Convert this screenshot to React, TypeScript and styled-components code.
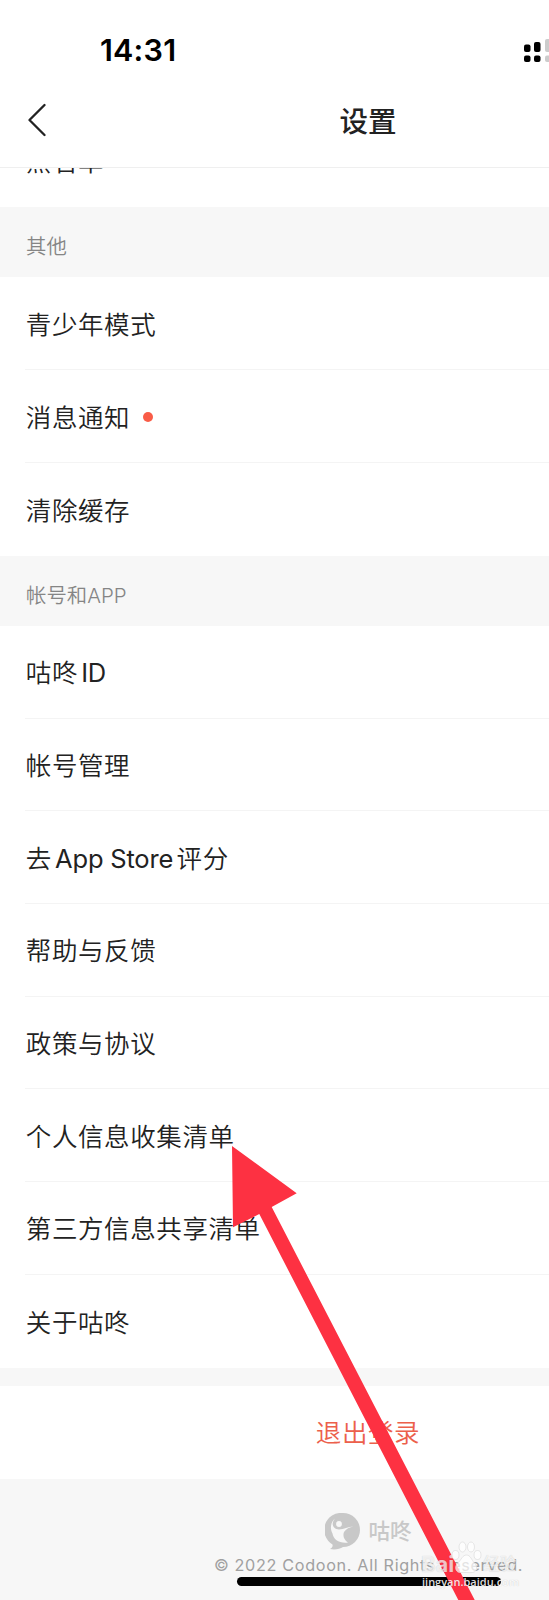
import React from "react";
import styled, { createGlobalStyle, css } from "styled-components";

const GlobalStyle = createGlobalStyle`
  *, *::before, *::after { box-sizing: border-box; }
  html, body { margin: 0; padding: 0; overflow: hidden; background: #f7f7f7; }
`;

const Viewport = styled.div`
  position: relative;
  width: 549px;
  height: 1600px;
  overflow: hidden;
  background: #f7f7f7;
  font-family: Inter, "Noto Sans CJK SC", sans-serif;
  color: #222;
`;

const Screen = styled.main`
  width: 737px;
  height: 1600px;
  display: flex;
  flex-direction: column;
`;

const StatusBar = styled.div`
  flex: none;
  height: 84px;
  padding: 15px 0 0 100px;
  display: flex;
  align-items: center;
  justify-content: space-between;
  background: #fff;
`;

const Clock = styled.time`
  font-size: 30.5px;
  line-height: 40px;
  font-weight: 600;
  letter-spacing: 0.2px;
  color: #000;
`;

const Signal = styled.svg`
  flex: none;
  width: 48px;
  height: 26px;
  margin-right: 165px;
`;

const NavBar = styled.header`
  flex: none;
  height: 84px;
  padding: 0 28px;
  display: grid;
  grid-template-columns: 20px 1fr 20px;
  align-items: center;
  background: #fff;
  border-bottom: 1px solid #efefef;
`;

const BackIcon = styled.svg`
  width: 20px;
  height: 34px;
  margin-top: -11px;
`;

const Title = styled.h1`
  margin: -7px 1px 0 0;
  text-align: center;
  font-size: 28.5px;
  line-height: 40px;
  font-weight: 500;
`;

const ClippedRow = styled.div`
  flex: none;
  height: 39px;
  overflow: hidden;
  display: flex;
  flex-direction: column;
  justify-content: flex-end;
  background: #fff;
`;

const SectionHeader = styled.h2`
  flex: none;
  margin: 0;
  height: 70px;
  padding: 10px 26px 0;
  display: flex;
  align-items: center;
  font-size: 20.4px;
  line-height: 30px;
  font-weight: 350;
  color: #858585;
`;

const List = styled.ul`
  flex: none;
  margin: 0;
  padding: 0;
  list-style: none;
  background: #fff;
`;

const rowText = css`
  height: 92.7px;
  display: flex;
  align-items: center;
  font-size: 25.5px;
  line-height: 36px;
  letter-spacing: 0.6px;
  font-weight: 350;
`;

const Row = styled.li<{ $last?: boolean; $tall?: boolean }>`
  ${rowText}
  flex: none;
  ${(p) => p.$tall && "height: 93px;"}
  margin-left: 25px;
  padding: 3px 0 0 0.8px;
  gap: 13px;
  border-bottom: ${(p) => (p.$last ? "0" : "1px solid #f4f4f4")};
`;

const Latin = styled.span`
  margin: 0 3.5px 0 3.2px;
  letter-spacing: -0.2px;
  font-weight: 400;
`;

const UnreadDot = styled.i`
  width: 10px;
  height: 10px;
  margin-top: -2px;
  border-radius: 50%;
  background: #f95c47;
`;

const LogoutButton = styled.button`
  ${rowText}
  flex: none;
  margin-top: 18.4px;
  padding: 2px 1px 0 0;
  border: 0;
  justify-content: center;
  font-family: inherit;
  color: #ec604b;
  background: #fff;
`;

const Footer = styled.footer`
  flex: 1;
  padding-top: 34px;
  display: flex;
  flex-direction: column;
  align-items: center;
`;

const Brand = styled.div`
  height: 37px;
  display: flex;
  align-items: center;
  gap: 8px;
  font-size: 21.5px;
  line-height: 30px;
  font-weight: 500;
  color: #c8c8c8;
`;

const BrandMark = styled.svg`
  width: 35px;
  height: 37px;
`;

const Copyright = styled.p`
  margin: 4px 0 0;
  font-size: 16.2px;
  line-height: 22px;
  letter-spacing: 0.67px;
  white-space: nowrap;
  color: #a0a0a0;
`;

const HomeIndicator = styled.div`
  width: 264px;
  height: 9px;
  margin-top: 1px;
  border-radius: 5px;
  background: #000;
`;

const Arrow = styled.svg`
  position: absolute;
  left: 0;
  top: 0;
  width: 549px;
  height: 1600px;
  pointer-events: none;
`;

const Watermark = styled.div`
  position: absolute;
  left: 421px;
  top: 1540px;
  width: 110px;
  color: rgba(255, 255, 255, 0.72);
  text-shadow: 0 0 1px rgba(0, 0, 0, 0.2);
`;

const WatermarkName = styled.div`
  height: 34px;
  display: flex;
  align-items: flex-end;
  font-size: 22px;
  line-height: 20px;
  font-weight: 700;
`;

const WatermarkCn = styled.span`
  margin-left: 1px;
  font-size: 16.5px;
  font-weight: 500;
`;

const Paw = styled.svg`
  width: 31px;
  height: 33px;
  margin-left: -3px;
`;

const WatermarkUrl = styled.div`
  padding-left: 1px;
  margin-top: 1px;
  font-family: "Open Sans", sans-serif;
  font-size: 11px;
  line-height: 14px;
  font-weight: 600;
  color: rgba(255, 255, 255, 0.88);
`;

const accountItems: React.ReactNode[] = [
  <span>咕咚<Latin>ID</Latin></span>,
  "帐号管理",
  <span>去<Latin>App Store</Latin>评分</span>,
  "帮助与反馈",
  "政策与协议",
  "个人信息收集清单",
  "第三方信息共享清单",
  "关于咕咚",
];

export default function App() {
  return (
    <Viewport>
      <GlobalStyle />
      <Screen>
        <StatusBar>
          <Clock>14:31</Clock>
          <Signal viewBox="0 0 48 26">
            <rect x="0" y="7.5" width="6.5" height="7.5" rx="2" />
            <rect x="0" y="18.5" width="6.5" height="6.5" rx="2" />
            <rect x="10" y="5" width="6.5" height="10" rx="2" />
            <rect x="10" y="18.5" width="6.5" height="6.5" rx="2" />
            <rect x="21" y="2" width="6.5" height="13" rx="2" fill="#ccc" />
            <rect x="21" y="18.5" width="6.5" height="6.5" rx="2" fill="#ccc" />
          </Signal>
        </StatusBar>
        <NavBar>
          <BackIcon viewBox="0 0 20 34" fill="none" stroke="#222" strokeWidth="2.3" strokeLinecap="round" strokeLinejoin="round">
            <path d="M16.5 2 1.5 17l15 15" />
          </BackIcon>
          <Title>设置</Title>
        </NavBar>
        <ClippedRow>
          <Row as="div" $last>黑名单</Row>
        </ClippedRow>
        <SectionHeader>其他</SectionHeader>
        <List>
          <Row $tall>青少年模式</Row>
          <Row $tall>消息通知<UnreadDot /></Row>
          <Row $tall $last>清除缓存</Row>
        </List>
        <SectionHeader>帐号和APP</SectionHeader>
        <List>
          {accountItems.map((item, i) => (
            <Row key={i} $last={i === accountItems.length - 1}>{item}</Row>
          ))}
        </List>
        <LogoutButton>退出登录</LogoutButton>
        <Footer>
          <Brand>
            <BrandMark viewBox="0 0 35 37">
              <path fill="#c8c8c8" d="M18 0a17 17 0 0 1 0 34c-3 2-8 3-13 2 2-1 3-2.5 2.5-4.5A17 17 0 0 1 18 0Z" />
              <path fill="#f7f7f7" d="M10 5.500C5.500 11 8 16 14 16.500c5 0 9-3 14.500-3-4 .5-7.500 2.500-9.500 5.500-1.500 4 0 8 4 10.500C14.500 30.500 8.500 27 7.500 20.500 4.500 15 6 9 10 5.500Z" />
              <circle cx="14" cy="11" r="3.5" fill="#f7f7f7" stroke="#c8c8c8" strokeWidth="1.2" />
            </BrandMark>
            咕咚
          </Brand>
          <Copyright>© 2022 Codoon. All Rights Reserved.</Copyright>
          <HomeIndicator />
        </Footer>
      </Screen>
      <Arrow viewBox="0 0 549 1600">
        <path fill="#fd3142" d="M232 1146 296.7 1193.3 271.7 1207 474.7 1600H458.3L259.3 1214 233 1227.3Z" />
      </Arrow>
      <Watermark>
        <WatermarkName>
          Bai
          <Paw viewBox="0 0 31 33" fill="rgba(255,255,255,.7)" stroke="#ddd" strokeWidth=".7">
            <ellipse cx="4.5" cy="14" rx="3.5" ry="4.5" />
            <ellipse cx="11.5" cy="6" rx="3.5" ry="5" />
            <ellipse cx="20" cy="6" rx="3.5" ry="5" />
            <ellipse cx="26.5" cy="14" rx="3.5" ry="4.5" />
            <path d="M15.5 14c4 0 5 5 8 8s3 9-2 9.5-8-.5-12 0-7-5-3-9 5-8.5 9-8.5Z" />
          </Paw>
          <WatermarkCn>经验</WatermarkCn>
        </WatermarkName>
        <WatermarkUrl>jingyan.baidu.com</WatermarkUrl>
      </Watermark>
    </Viewport>
  );
}
